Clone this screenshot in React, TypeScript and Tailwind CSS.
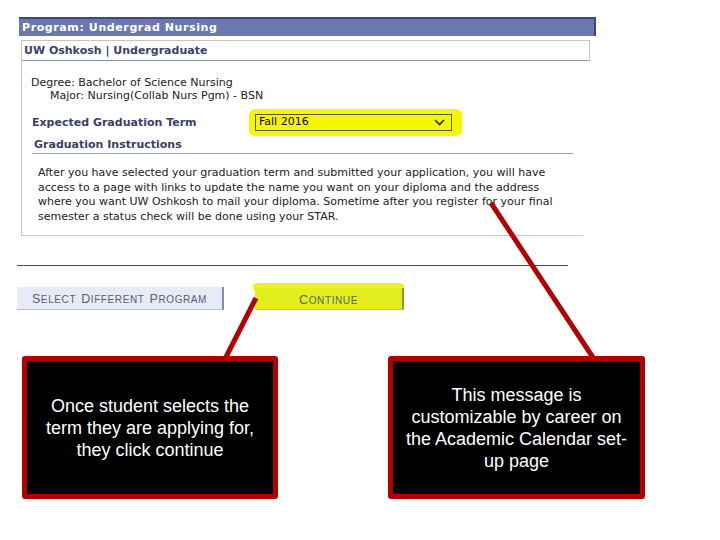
import React from "react";

const verdana = { fontFamily: "'DejaVu Sans', Verdana, sans-serif" };
const arial = { fontFamily: "'Liberation Sans', Arial, sans-serif" };

function Callout({ children, width }: { children: React.ReactNode; width: string }) {
  return (
    <div
      className={`${width} h-[143px] bg-black border-[5px] border-[#b30000] rounded-[3px] flex items-center justify-center text-center text-white text-[18px] leading-[22px] px-3`}
      style={arial}
    >
      {children}
    </div>
  );
}

// small caps drawn by hand: first letter of each word larger
function SmallCaps({ words }: { words: string[] }) {
  return (
    <span className="uppercase tracking-[0.6px]">
      {words.map((w, i) => (
        <span key={i}>
          {i > 0 && " "}
          <span className="text-[12.5px]">{w[0]}</span>
          <span className="text-[10px]">{w.slice(1)}</span>
        </span>
      ))}
    </span>
  );
}

export default function App() {
  return (
    <div className="relative w-[720px] h-[540px] bg-white pt-[17px] pl-[17px] overflow-hidden">
      {/* program header */}
      <div
        className="ml-[2px] w-[577px] h-[19px] bg-[#6b78ae] border-t-2 border-r-2 border-[#3f4879] text-white font-bold text-[11px] tracking-[0.6px] leading-[17px] pl-[3px]"
        style={verdana}
      >
        Program: Undergrad Nursing
      </div>

      {/* program box */}
      <div className="ml-[4px] mt-[4px] w-[569px] border-t border-l border-[#c4c4c4]" style={verdana}>
        <div className="h-[20px] border-r border-b border-r-[#c4c4c4] border-b-[#8e98a8] text-[11px] font-bold text-[#3a4368] leading-[19px] pl-[2px]">
          UW Oshkosh | Undergraduate
        </div>
        <div className="w-[561px] border-b border-[#c8c8c8] pl-[9px] pb-[11px] text-[11px] text-[#222]">
          <div className="mt-[15px] leading-[13px]">Degree: Bachelor of Science Nursing</div>
          <div className="leading-[13px] pl-[19px]">Major: Nursing(Collab Nurs Pgm) - BSN</div>

          <div className="mt-[12px] flex items-center h-[17px]">
            <div className="w-[224px] pl-[1px] pt-[2px] font-bold text-[#39406a]">Expected Graduation Term</div>
            <div className="relative">
              <div className="absolute -left-[6px] -right-[10px] -top-[5px] -bottom-[5px] bg-[#f6f600] rounded-[6px]" />
              <div className="relative w-[197px] h-[17px] border border-[#555] bg-[#f6f600] flex items-center justify-between pl-[3px] pr-[6px]">
                <span className="text-black">Fall 2016</span>
                <svg width="11" height="7" viewBox="0 0 11 7">
                  <path d="M1 1 L5.5 5.5 L10 1" fill="none" stroke="#222" strokeWidth="1.6" />
                </svg>
              </div>
            </div>
          </div>

          <div className="mt-[7px] ml-[1px] w-[541px] border-b border-[#9aa0ac] pb-[2px]">
            <div className="pl-[2px] leading-[13px] font-bold text-[#39406a]">Graduation Instructions</div>
          </div>

          <div className="mt-[12px] pl-[7px] leading-[14.5px] text-[#222]">
            After you have selected your graduation term and submitted your application, you will have
            <br />
            access to a page with links to update the name you want on your diploma and the address
            <br />
            where you want UW Oshkosh to mail your diploma. Sometime after you register for your final
            <br />
            semester a status check will be done using your STAR.
          </div>
        </div>
      </div>

      {/* separator */}
      <div className="mt-[29px] w-[551px] border-t border-[#4a4a4a]" />

      {/* buttons */}
      <div className="mt-[21px] flex items-start gap-[31px]" style={arial}>
        <div className="w-[207px] h-[23px] bg-[#e7ebf4] border-r-2 border-b border-r-[#7f8db0] border-b-[#b8bfcc] flex items-center justify-center text-[#56607a]">
          <SmallCaps words={["Select", "Different", "Program"]} />
        </div>
        <div className="relative mt-[1px]">
          <div className="absolute -left-[2px] right-0 -top-[5px] h-[8px] bg-[#eef21a] rounded-[4px]" />
          <div className="relative w-[149px] h-[22px] bg-[#e3ef1c] border-r-2 border-b border-r-[#8a9a3a] border-b-[#b7c28a] flex items-center justify-center text-[#5a645c]">
            <SmallCaps words={["Continue"]} />
          </div>
        </div>
      </div>

      {/* callouts */}
      <div className="mt-[46px] ml-[5px] flex gap-[110px]">
        <Callout width="w-[256px]">
          Once student selects the term they are applying for, they click continue
        </Callout>
        <Callout width="w-[257px]">
          This message is customizable by career on the Academic Calendar set-up page
        </Callout>
      </div>

      {/* annotation pointers */}
      <svg className="absolute left-0 top-0 pointer-events-none" width="720" height="540">
        <line x1="256" y1="298" x2="225" y2="359" stroke="#b30000" strokeWidth="5" />
        <line x1="491" y1="203" x2="594" y2="359" stroke="#b30000" strokeWidth="5" />
      </svg>
    </div>
  );
}
